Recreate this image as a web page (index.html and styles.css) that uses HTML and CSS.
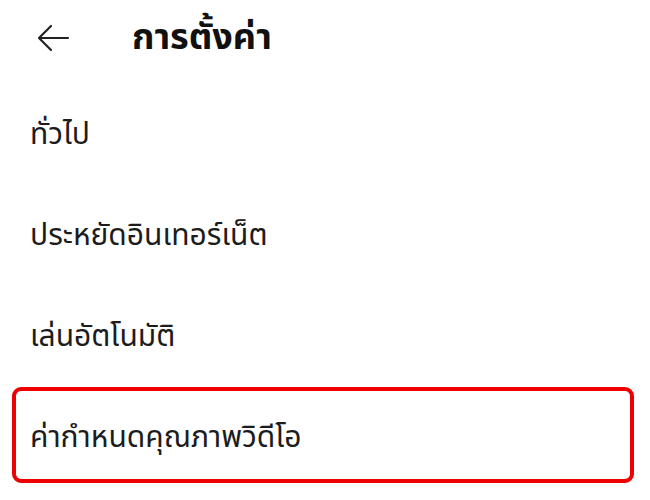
FILE: index.html
```html
<!DOCTYPE html>
<html lang="th">
<head>
<meta charset="utf-8">
<link rel="stylesheet" href="styles.css">
</head>
<body>
<div class="screen">
  <header class="topbar">
    <svg class="back" width="34" height="30" viewBox="0 0 34 30">
      <path d="M32 15H3M15 3L3 15L15 27" fill="none" stroke="#222" stroke-width="2.2" stroke-linecap="round" stroke-linejoin="round"/>
    </svg>
    <h1 class="title">การตั้งค่า</h1>
  </header>
  <ul class="menu">
    <li class="item">ทั่วไป</li>
    <li class="item">ประหยัดอินเทอร์เน็ต</li>
    <li class="item">เล่นอัตโนมัติ</li>
    <li class="item highlighted">ค่ากำหนดคุณภาพวิดีโอ</li>
  </ul>
</div>
</body>
</html>
```
FILE: styles.css
```css
html, body {
  margin: 0;
  padding: 0;
  background: #ffffff;
}
body {
  font-family: "Noto Sans Thai", "Noto Sans", "DejaVu Sans", sans-serif;
  color: #1c1c1c;
}
.screen {
  width: 650px;
  height: 500px;
  overflow: hidden;
}
.topbar {
  display: flex;
  align-items: center;
  height: 84px;
  box-sizing: border-box;
  padding: 0 0 8px 36px;
}
.back {
  display: block;
}
.title {
  margin: 0 0 0 62px;
  font-size: 36px;
  font-weight: 700;
  color: #111;
}
.menu {
  list-style: none;
  margin: 0;
  padding: 0 16px 0 12px;
  display: flex;
  flex-direction: column;
  gap: 5px;
}
.item {
  height: 96px;
  display: flex;
  align-items: center;
  padding: 6px 0 0 14px;
  font-size: 30px;
  box-sizing: border-box;
  border: 4px solid transparent;
  border-radius: 9px;
}
.highlighted {
  border-color: #ee0000;
}
```
